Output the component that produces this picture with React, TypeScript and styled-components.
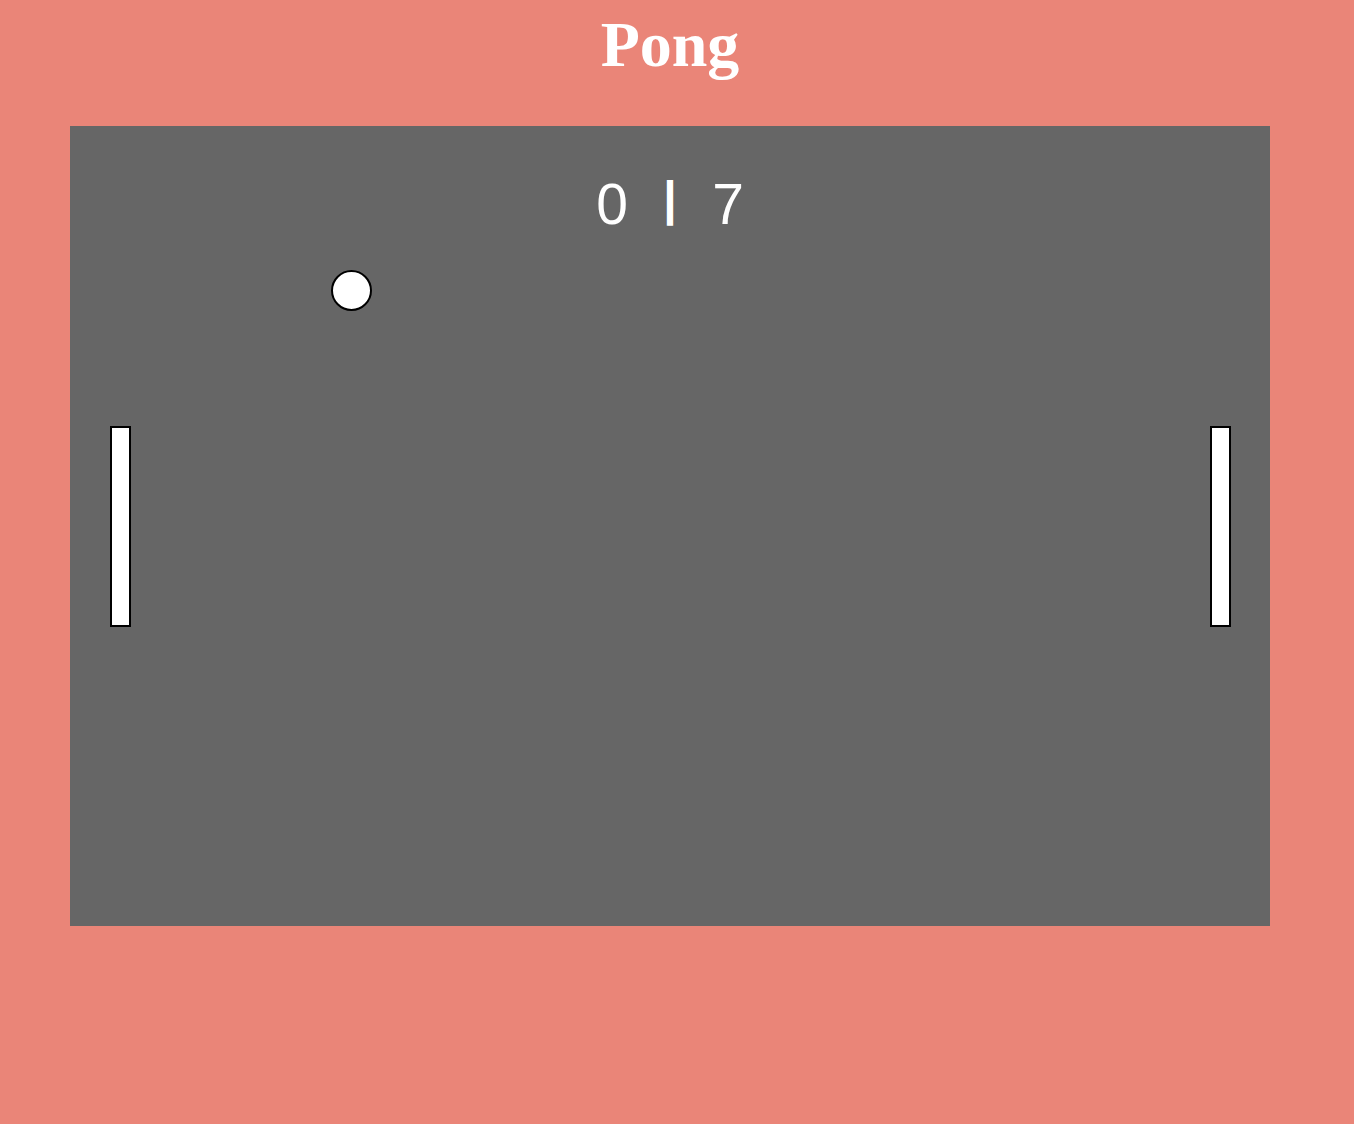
import React from "react";
import styled, { createGlobalStyle } from "styled-components";

const GlobalStyle = createGlobalStyle`
  html, body {
    margin: 0;
    padding: 0;
    background: #ea8578;
  }
  body {
    min-height: 1124px;
    font-family: "Liberation Serif", serif;
  }
`;

const Page = styled.main`
  display: flex;
  flex-direction: column;
  align-items: center;
  padding: 8px 14px 0 0;
`;

const Title = styled.h1`
  margin: 0;
  font-family: "Liberation Serif", "Times New Roman", serif;
  font-weight: 700;
  font-size: 64px;
  line-height: normal;
  color: #ffffff;
`;

const Board = styled.section`
  position: relative;
  margin-top: 44px;
  width: 1200px;
  height: 800px;
  background: #666666;
  box-sizing: border-box;
  padding-top: 49px;
`;

const Score = styled.div`
  text-align: center;
  font-family: "Liberation Sans", Arial, sans-serif;
  font-size: 57px;
  line-height: 1;
  color: #ffffff;
  white-space: nowrap;
`;

const Cell = styled.span<{ $bar?: boolean }>`
  display: inline-block;
  width: 58px;
  text-align: center;
  font-size: ${(p) => (p.$bar ? "48px" : "57px")};
  font-weight: ${(p) => (p.$bar ? 700 : 400)};
  vertical-align: ${(p) => (p.$bar ? "9px" : "baseline")};
`;

const Paddle = styled.div<{ $left: number; $top: number }>`
  position: absolute;
  left: ${(p) => p.$left}px;
  top: ${(p) => p.$top}px;
  width: 17px;
  height: 197px;
  background: #ffffff;
  border: 2px solid #000000;
`;

const Ball = styled.div<{ $left: number; $top: number }>`
  position: absolute;
  left: ${(p) => p.$left}px;
  top: ${(p) => p.$top}px;
  width: 37px;
  height: 37px;
  border-radius: 50%;
  background: #ffffff;
  border: 2px solid #000000;
`;

export default function App() {
  return (
    <>
      <GlobalStyle />
      <Page>
        <Title>Pong</Title>
        <Board>
          <Score>
            <Cell>0</Cell>
            <Cell $bar>|</Cell>
            <Cell>7</Cell>
          </Score>
          <Ball $left={261} $top={144} />
          <Paddle $left={40} $top={300} />
          <Paddle $left={1140} $top={300} />
        </Board>
      </Page>
    </>
  );
}
